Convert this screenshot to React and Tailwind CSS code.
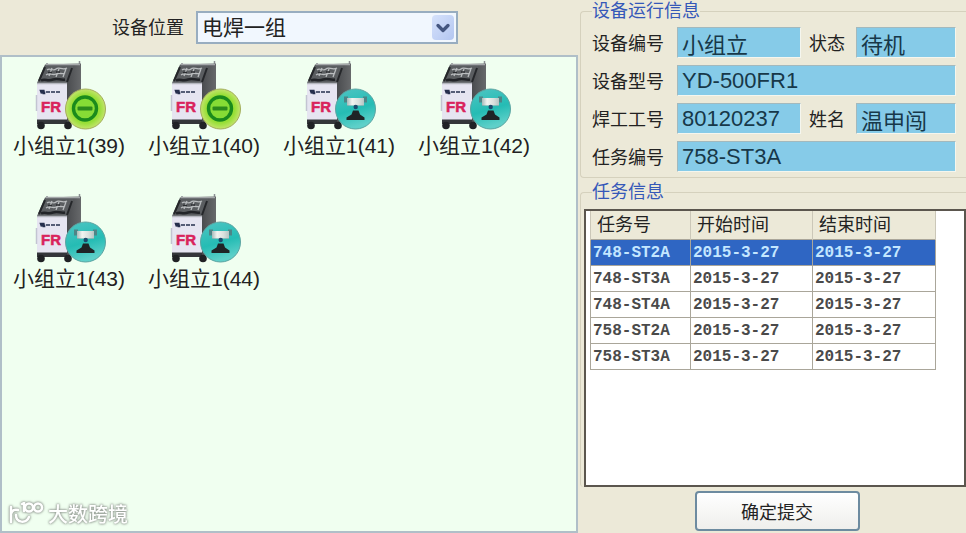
import { ChevronDown } from 'lucide-react';

const machines = [
    { id: 39, status: 'idle' },
    { id: 40, status: 'idle' },
    { id: 41, status: 'welding' },
    { id: 42, status: 'welding' },
    { id: 43, status: 'welding' },
    { id: 44, status: 'welding' },
];

const tasks = ['748-ST2A', '748-ST3A', '748-ST4A', '758-ST2A', '758-ST3A'];

const IdleBadge = () => (
    <g>
        <circle cx="50.500" cy="48" r="20" fill="url(#idle)" stroke="#a3ad5c" strokeWidth="1" />
        <circle cx="50" cy="47.500" r="11.500" fill="#86dc35" stroke="#1a8a1c" strokeWidth="3.400" />
        <rect x="42.500" y="45.500" width="15" height="4" rx="1" fill="#2c8a1c" />
    </g>
);

const WeldingBadge = () => (
    <g>
        <circle cx="50.500" cy="48" r="20" fill="url(#welding)" stroke="#5da5a2" strokeWidth="1" />
        <path d="M39 35.500h4v2h15v-2h4v6h-3v3H42v-3h-3z" fill="#4d8587" />
        <rect x="42" y="37" width="17" height="7.500" fill="url(#metal)" />
        <circle cx="50.700" cy="46" r="2.200" fill="#1c4a6c" />
        <path d="M48 49.500h5.500l1.500 4 4.500 3V59h-18v-2.500l5-3z" fill="#1f2426" />
    </g>
);

const MachineIcon = ({ status }) => (
    <svg viewBox="0 0 71 72" className="w-[71px] h-[72px]" aria-hidden="true">
        <defs>
            <radialGradient id="idle" cx="50%" cy="50%" r="50%">
                <stop offset="0" stopColor="#8ee63a" />
                <stop offset="0.7" stopColor="#97df36" />
                <stop offset="1" stopColor="#c3e46c" />
            </radialGradient>
            <linearGradient id="welding" x1="0" y1="0" x2="0.3" y2="1">
                <stop offset="0" stopColor="#4fc5c3" />
                <stop offset="0.6" stopColor="#25bcb4" />
                <stop offset="1" stopColor="#5ed0c9" />
            </linearGradient>
            <linearGradient id="metal">
                <stop offset="0" stopColor="#a8baba" />
                <stop offset="0.3" stopColor="#f2f4f1" />
                <stop offset="0.7" stopColor="#d8dfdc" />
                <stop offset="1" stopColor="#b4c5c4" />
            </linearGradient>
            <linearGradient id="side">
                <stop offset="0" stopColor="#1f2124" />
                <stop offset="0.6" stopColor="#4a4c4f" />
                <stop offset="1" stopColor="#67696b" />
            </linearGradient>
        </defs>
        {/* cabinet */}
        <path d="M12 5V2M44.500 5V0" stroke="#8b8f92" strokeWidth="1.500" />
        <path d="M11 3.500L46 2.500V53L32 65V22z" fill="url(#side)" />
        <path d="M10 3.500H39L32 22H2z" fill="#5a5d60" />
        <path d="M11 3.500h34" stroke="#a5a8aa" strokeWidth="1.500" />
        <path d="M10 6L4 20M37 7l-5 14" stroke="#25272a" strokeWidth="2" />
        <path d="M12 9c3-3 6 2 9-1s6 2 11-1M11 14c4-3 6 1 10-1s6 1 9-1M17 7l-3 8M24 8l-3 8M31 8l-3 8" fill="none" stroke="#b9bcbe" strokeWidth="1.300" />
        <path d="M6 19.500c4-2 7 1 12-1s7 1 12 0" fill="none" stroke="#222428" strokeWidth="2.500" />
        <path d="M13 11.500h4M21 11h4" stroke="#2b2d30" strokeWidth="1.500" />
        <path d="M2 22h30v37H2z" fill="#e6e5f1" />
        <path d="M2 22.500h30" stroke="#b5b7bf" strokeWidth="1.500" />
        <path d="M1.500 34v16" stroke="#c3c4d2" strokeWidth="1.500" />
        <path d="M5.500 29.500h4v3h-3zM11 31h15" fill="#26304d" stroke="#26304d" strokeWidth="1.600" strokeDasharray="4 1" />
        <path d="M2 58.500h30v4.500H2z" fill="#34363a" />
        <circle cx="6" cy="64.500" r="3.800" fill="#202225" />
        <circle cx="33" cy="64.500" r="3.800" fill="#202225" />
        <text x="6" y="51" fill="#d9235c" stroke="#d9235c" strokeWidth="0.500" fontSize="15" fontWeight="700" fontFamily="Liberation Sans, sans-serif">FR</text>
        {status === 'idle' ? <IdleBadge /> : <WeldingBadge />}
    </svg>
);

const Field = ({ id, label, value, wide, indent }) => (
    <>
        <label htmlFor={id} className={indent ? 'pl-2 pt-0.5' : 'pt-0.5'}>{label}</label>
        <input
            id={id}
            readOnly
            defaultValue={value}
            className={`${wide ? 'col-span-3' : ''} min-w-0 w-full h-[31px] px-1 bg-[#86cbe8] border border-t-[#a3b9bd] border-l-[#a3b9bd] border-r-[#f5f6ee] border-b-[#f5f6ee] text-[22px] leading-7 text-[#173849] outline-none`}
        />
    </>
);

const DevicePanel = () => (
    <section className="flex flex-col">
        <div className="h-[55px] flex items-center gap-3 pl-28 text-lg">
            <label htmlFor="location">设备位置</label>
            <div className="relative w-[262px]">
                <select
                    id="location"
                    className="appearance-none w-full h-[33px] pl-1 bg-[#f1f7fe] border-2 border-[#98adc0] text-[21px] leading-7 text-[#222] outline-none"
                >
                    <option>电焊一组</option>
                </select>
                <span className="absolute right-1 top-1 bottom-1 w-[22px] rounded-sm bg-linear-to-br from-[#d6e2fb] to-[#b3c6f1] flex items-center justify-center pointer-events-none">
                    <ChevronDown className="w-5 h-5 text-[#445680]" strokeWidth={4} />
                </span>
            </div>
        </div>

        <div className="relative flex-1 border-2 border-[#b0bfc8] bg-[#f0fff0]">
            <ul className="grid grid-cols-[repeat(auto-fill,135px)] pt-1 pl-1">
                {machines.map((m) => (
                    <li key={m.id} className="h-[133px] pl-[7px]">
                        <div className="pl-[22px]">
                            <MachineIcon status={m.status} />
                        </div>
                        <p className="text-[21px] leading-[26px] whitespace-nowrap">小组立1({m.id})</p>
                    </li>
                ))}
            </ul>

            {/* Watermark */}
            <div className="absolute left-1.5 bottom-0.5 flex items-center gap-1 text-white [filter:drop-shadow(0_0_1px_#8d968d)_drop-shadow(0_0_1px_#a9b2a9)]">
                <svg viewBox="0 0 36 26" className="w-9 h-[26px]" fill="none" stroke="currentColor" strokeWidth="2.500" strokeLinecap="round" aria-hidden="true">
                    <path d="M3 5v15M3 12c1-4 4-5 7-4M8 13c0 8 10 9 13 2" />
                    <path d="M14 2l2-1v8" />
                    <circle cx="21" cy="5.500" r="4" />
                    <circle cx="30" cy="5.500" r="4" />
                </svg>
                <span className="text-xl leading-7 font-medium">大数跨境</span>
            </div>
        </div>
    </section>
);

const TaskTable = () => (
    <table className="w-[346px] table-fixed border-collapse">
        <colgroup>
            <col className="w-[100px]" />
            <col />
            <col className="w-[123px]" />
        </colgroup>
        <thead>
            <tr className="h-7 bg-[#ece9d8] text-lg leading-6 text-left">
                {['任务号', '开始时间', '结束时间'].map((title) => (
                    <th key={title} className="p-0 pl-1.5 font-normal border-x border-[#cbc7b8]">{title}</th>
                ))}
            </tr>
        </thead>
        <tbody className="font-['Liberation_Mono','Noto_Sans_CJK_SC',monospace] font-bold text-base leading-6">
            {tasks.map((task, i) => (
                <tr key={task} className={i === 0 ? 'h-[26px] bg-[#2f66c3] text-[#c4e6ff]' : 'h-[26px] bg-white text-[#4a4a4a]'}>
                    <td className="p-0 pl-0.5 pt-0.5 border border-[#aaa69a] leading-[23px]">{task}</td>
                    <td className="p-0 pl-0.5 pt-0.5 border border-[#aaa69a] leading-[23px]">2015-3-27</td>
                    <td className="p-0 pl-0.5 pt-0.5 border border-[#aaa69a] leading-[23px]">2015-3-27</td>
                </tr>
            ))}
        </tbody>
    </table>
);

const InfoPanel = () => (
    <section className="flex flex-col pl-0.5 pb-0.5 text-lg">
        <fieldset className="border border-r-0 border-[#d5d1bd] rounded-l pl-[11px] pr-2.5 pt-[5px] pb-[5px]">
            <legend className="leading-[22px] text-[#3558b8]">设备运行信息</legend>
            <div className="grid grid-cols-[85px_1fr_55px_100px] items-center gap-y-[7px]">
                <Field id="device" label="设备编号" value="小组立" />
                <Field id="state" label="状态" value="待机" indent />
                <Field id="model" label="设备型号" value="YD-500FR1" wide />
                <Field id="welder" label="焊工工号" value="80120237" />
                <Field id="name" label="姓名" value="温申闯" indent />
                <Field id="task" label="任务编号" value="758-ST3A" wide />
            </div>
        </fieldset>

        <fieldset className="flex-1 flex flex-col border border-r-0 border-b-0 border-[#d5d1bd] rounded-l mt-[3px] pl-[3px] pt-1.5">
            <legend className="ml-2 leading-[22px] text-[#3558b8]">任务信息</legend>
            <div className="flex-1 border-2 border-[#5b564e] bg-white pl-1 overflow-auto">
                <TaskTable />
            </div>
        </fieldset>

        <button
            type="button"
            className="self-center ml-2 mt-1 w-[165px] h-10 pt-1 rounded border-2 border-[#6d8ba0] bg-linear-to-b from-white to-[#efefec] text-lg text-[#222]"
        >
            确定提交
        </button>
    </section>
);

const App = () => (
    <main className="min-h-screen grid grid-cols-[578fr_388fr] bg-[#ece9d8] text-[#222] font-['Liberation_Sans','Noto_Sans_CJK_SC',sans-serif]">
        <DevicePanel />
        <InfoPanel />
    </main>
);

export default App;
